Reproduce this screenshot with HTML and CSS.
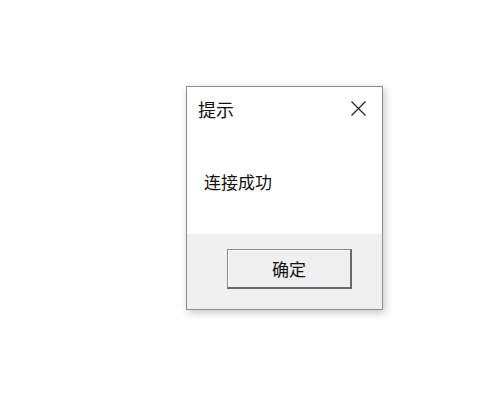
FILE: index.html
```html
<!DOCTYPE html>
<html lang="zh-CN">
<head>
<meta charset="utf-8">
<title>提示</title>
<link rel="stylesheet" href="styles.css">
</head>
<body>
<div class="dialog">
  <div class="dialog-header">
    <span class="dialog-title">提示</span>
    <svg class="close-icon" width="15" height="15" viewBox="0 0 15 15" aria-label="关闭">
      <path d="M0.5 0.5 L14.5 14.5 M14.5 0.5 L0.5 14.5" stroke="#222" stroke-width="1.2" fill="none"/>
    </svg>
  </div>
  <div class="dialog-body">连接成功</div>
  <div class="dialog-footer">
    <button class="ok-button">确定</button>
  </div>
</div>
</body>
</html>
```
FILE: styles.css
```css
html, body {
  margin: 0;
  padding: 0;
  background: #ffffff;
}
body {
  width: 492px;
  height: 406px;
  overflow: hidden;
  font-family: "Noto Sans CJK SC", "Noto Sans", sans-serif;
  color: #111;
}
.dialog {
  margin: 86px 0 0 186px;
  width: 195px;
  height: 222px;
  border: 1px solid #8c8c8c;
  background: #ffffff;
  box-shadow: 2px 3px 8px rgba(0, 0, 0, 0.22);
  display: flex;
  flex-direction: column;
}
.dialog-header {
  height: 43px;
  display: flex;
  align-items: center;
  justify-content: space-between;
  padding: 0 16px 0 11px;
}
.dialog-title {
  font-size: 18px;
  line-height: 20px;
}
.close-icon {
  display: block;
}
.dialog-body {
  height: 104px;
  display: flex;
  align-items: center;
  padding-left: 17px;
  font-size: 17px;
  line-height: 20px;
}
.dialog-footer {
  flex: 1;
  background: #f0f0f0;
  padding: 15px 0 0 40px;
}
.ok-button {
  width: 125px;
  height: 40px;
  box-sizing: border-box;
  border-top: 1px solid #8a8a8a;
  border-left: 1px solid #8a8a8a;
  border-right: 2px solid #696969;
  border-bottom: 2px solid #696969;
  background: #efefef;
  box-shadow: inset 1px 1px 0 #ffffff;
  font-family: "Noto Sans CJK SC", "Noto Sans", sans-serif;
  font-size: 17px;
  color: #111;
  padding: 0;
  display: flex;
  align-items: center;
  justify-content: center;
}
```
